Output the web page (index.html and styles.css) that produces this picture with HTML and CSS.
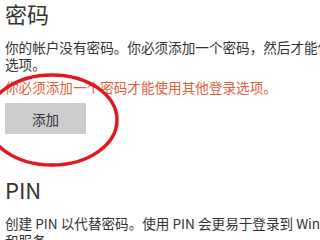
FILE: index.html
```html
<!DOCTYPE html>
<html lang="zh-CN">
<head>
<meta charset="utf-8">
<link rel="stylesheet" href="styles.css">
</head>
<body>
<div class="page">
  <h1 class="title">密码</h1>
  <p class="text">你的帐户没有密码。你必须添加一个密码，然后才能使用其他登录选项。</p>
  <p class="error">你必须添加一个密码才能使用其他登录选项。</p>
  <button class="btn">添加</button>
  <h1 class="title pin">PIN</h1>
  <p class="text">创建 PIN 以代替密码。使用 PIN 会更易于登录到 Windows、应用和服务。</p>
  <svg class="circle" width="140" height="110" viewBox="0 0 140 110">
    <ellipse cx="66" cy="51" rx="65" ry="45" fill="none" stroke="#e3171f" stroke-width="3.5"/>
  </svg>
</div>
</body>
</html>
```
FILE: styles.css
```css
html, body {
  margin: 0;
  padding: 0;
  background: #ffffff;
  overflow: hidden;
}
.page {
  position: relative;
  width: 400px;
  padding-left: 5px;
  font-family: "Noto Sans CJK SC", "Noto Sans", sans-serif;
  color: #333333;
}
.title {
  margin: 0;
  font-size: 22px;
  font-weight: 400;
  line-height: 26px;
}
.text {
  margin: 13px 0 0;
  font-size: 13.6px;
  line-height: 17px;
}
.error {
  margin: 6px 0 0;
  font-size: 13.6px;
  line-height: 17px;
  color: #e4603a;
}
.btn {
  display: block;
  margin-top: 7px;
  width: 81px;
  height: 31px;
  border: none;
  background: #cccccc;
  color: #333333;
  font-family: "Noto Sans CJK SC", sans-serif;
  font-size: 13.5px;
  padding: 0;
}
.pin {
  margin-top: 42px;
}
.circle {
  position: absolute;
  left: -14px;
  top: 69px;
}
```
